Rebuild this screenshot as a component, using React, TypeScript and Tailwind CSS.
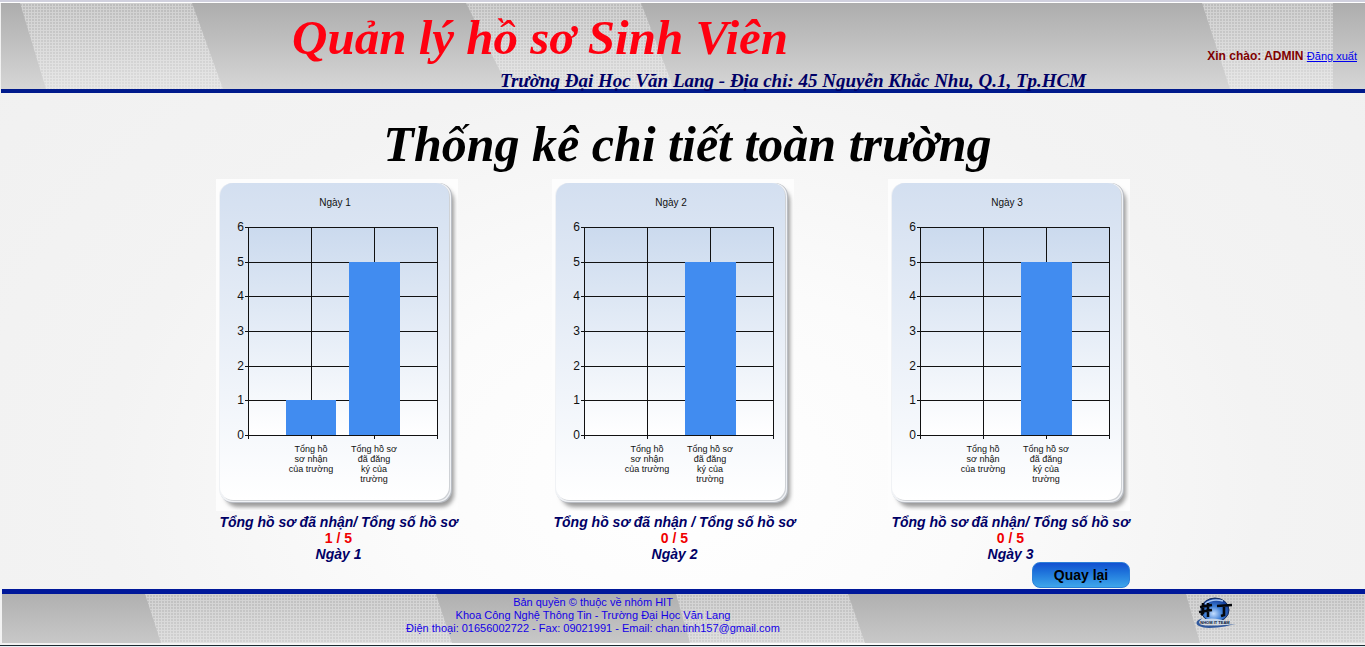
import React from "react";

type Day = { id: number; received: number; registered: number; caption: string };

const days: Day[] = [
  { id: 1, received: 1, registered: 5, caption: "Tổng hồ sơ đã nhận/ Tổng số hồ sơ" },
  { id: 2, received: 0, registered: 5, caption: "Tổng hồ sơ đã nhận / Tổng số hồ sơ" },
  { id: 3, received: 0, registered: 5, caption: "Tổng hồ sơ đã nhận/ Tổng số hồ sơ" },
];

const TOP = 48;
const BOTTOM = 256;
const yOf = (v: number) => Math.round(BOTTOM - (v * (BOTTOM - TOP)) / 6);

function Bands({ id, shapes }: { id: string; shapes: string[] }) {
  return (
    <svg className="absolute inset-0 h-full w-full" aria-hidden="true">
      <defs>
        <pattern id={id} width="3" height="3" patternUnits="userSpaceOnUse">
          <rect width="3" height="3" fill="#fff" fillOpacity="0.18" />
          <path d="M0 0H3V1H1V3H0Z" fill="#fff" fillOpacity="0.3" />
        </pattern>
      </defs>
      {shapes.map((s) => (
        <polygon key={s} points={s} fill={`url(#${id})`} />
      ))}
    </svg>
  );
}

function Chart({ day }: { day: Day }) {
  const area = `area-${day.id}`;
  const card = `card-${day.id}`;
  const shadow = `shadow-${day.id}`;
  return (
    <svg
      className="block bg-[#fdfdfd] font-['Liberation_Sans',sans-serif]"
      width="242"
      height="332"
      viewBox="0 0 242 332"
      role="img"
      aria-label={`Ngày ${day.id}`}
    >
      <defs>
        <linearGradient id={card} x1="0" y1="0" x2="0" y2="1">
          <stop offset="0" stopColor="#d3dff0" />
          <stop offset="1" stopColor="#ffffff" />
        </linearGradient>
        <linearGradient id={area} x1="0" y1="0" x2="0" y2="1">
          <stop offset="0" stopColor="#cbdaee" />
          <stop offset="1" stopColor="#ffffff" />
        </linearGradient>
        <filter id={shadow} x="-10%" y="-10%" width="120%" height="120%">
          <feGaussianBlur stdDeviation="2" />
        </filter>
      </defs>
      <rect x="9" y="9" width="229" height="319" rx="13" fill="#9a9a9a" filter={`url(#${shadow})`} />
      <rect x="4" y="4" width="232" height="320" rx="13" fill="#b9bdc4" />
      <rect x="3" y="4" width="232" height="319" rx="13" fill="#f0f2f5" />
      <rect x="5" y="5" width="229" height="317" rx="13" fill="#cfd2d6" />
      <rect x="4" y="4" width="229" height="317" rx="13" fill={`url(#${card})`} />
      <text x="119" y="27" textAnchor="middle" fontSize="10" fill="#111">
        Ngày {day.id}
      </text>
      <rect x="32" y={TOP} width="190" height={BOTTOM - TOP} fill={`url(#${area})`} />
      <g stroke="#111" strokeWidth="1" shapeRendering="crispEdges">
        {[0, 1, 2, 3, 4, 5, 6].map((v) => (
          <line key={v} x1="29" x2="222" y1={yOf(v) + 0.5} y2={yOf(v) + 0.5} />
        ))}
        {[32, 95, 158, 221].map((x) => (
          <line key={x} x1={x + 0.5} x2={x + 0.5} y1={TOP} y2={BOTTOM + 4} />
        ))}
      </g>
      {[0, 1, 2, 3, 4, 5, 6].map((v) => (
        <text key={v} x="28" y={yOf(v) + 4} textAnchor="end" fontSize="12" fill="#111">
          {v}
        </text>
      ))}
      <rect x="70" y={yOf(day.received)} width="50" height={BOTTOM - yOf(day.received)} fill="#418cf0" />
      <rect x="133" y={yOf(day.registered)} width="51" height={BOTTOM - yOf(day.registered)} fill="#418cf0" />
      <g fontSize="9" textAnchor="middle" fill="#111">
        {["Tổng hồ", "sơ nhận", "của trường"].map((t, i) => (
          <text key={t} x="95" y={273 + i * 10}>
            {t}
          </text>
        ))}
        {["Tổng hồ sơ", "đã đăng", "ký của", "trường"].map((t, i) => (
          <text key={t} x="158" y={273 + i * 10}>
            {t}
          </text>
        ))}
      </g>
    </svg>
  );
}

function Logo() {
  return (
    <svg className="block" width="44" height="34" viewBox="0 0 44 34" role="img" aria-label="HIT">
      <defs>
        <radialGradient id="globe" cx="0.45" cy="0.65" r="0.6">
          <stop offset="0" stopColor="#c4deff" />
          <stop offset="0.5" stopColor="#3f7fd6" />
          <stop offset="1" stopColor="#123c9a" />
        </radialGradient>
      </defs>
      <ellipse cx="21" cy="14" rx="14" ry="12" fill="url(#globe)" stroke="#142c5c" />
      <path d="M11 8Q18 2 29 5" fill="none" stroke="#a9c8f2" strokeWidth="1.5" />
      <path
        d="M9 22C-1 25 0 31 15 32C27 32 36 29 42 28C32 29 10 31 6 28C4 26 6 24 9 22Z"
        fill="#31599d"
      />
      <path d="M6 24Q20 20 35 26L34 29Q20 26 8 28Z" fill="#c3d4ea" />
      <path
        d="M6 11L18 9M5 16L18 14M9 7V17L7 19M14 7V21M23 10L38 9M30 9V19L27 20"
        fill="none"
        stroke="#05070c"
        strokeWidth="2.6"
      />
      <text x="21" y="28" textAnchor="middle" fontSize="4" fontWeight="700" fill="#0a1430">
        NHOM IT TEAM
      </text>
    </svg>
  );
}

export default function App() {
  return (
    <div className="flex min-h-screen flex-col bg-[radial-gradient(ellipse_at_50%_75%,#ffffff_0%,#fbfbfb_30%,#f3f3f3_60%,#f0f0f0_100%)] font-['Liberation_Sans',sans-serif]">
      <div className="h-[3px] border-b border-white bg-[#d0d0de]" />
      <header className="relative ml-px h-[90px] border-b-4 border-[#001a8c] bg-linear-to-b from-[#adadad] to-[#d6d6d6]">
        <Bands
          id="header-mesh"
          shapes={["19,0 191,0 222,86 45,86", "465,0 640,0 673,86 508,86", "1201,0 1332,0 1332,86 1229,86"]}
        />
        <div className="relative flex items-start justify-between">
          <div className="pl-[291px] font-['Liberation_Serif',serif] font-bold whitespace-nowrap italic">
            <h1 className="pt-1 text-[49px] leading-[62px] text-[#ff0010]">Quản lý hồ sơ Sinh Viên</h1>
            <p className="pl-52 text-[19px] leading-6 text-[#000066]">
              Trường Đại Học Văn Lang - Địa chỉ: 45 Nguyễn Khắc Nhu, Q.1, Tp.HCM
            </p>
          </div>
          <p className="pt-11 pr-2 text-[12px] leading-[18px] whitespace-nowrap">
            <span className="font-bold text-[#800000]">Xin chào: ADMIN</span>{" "}
            <a href="#logout" className="text-[11px] text-[#0000ee] underline">
              Đăng xuất
            </a>
          </p>
        </div>
      </header>

      <main className="flex-1">
        <h2 className="h-[86px] pt-5 pl-[10px] text-center font-['Liberation_Serif',serif] text-[50px] leading-[62px] font-bold text-black italic">
          Thống kê chi tiết toàn trường
        </h2>
        <div className="pr-[19px]">
          <div className="mx-auto flex max-w-[914px] flex-col">
            <div className="flex justify-between">
              {days.map((day) => (
                <section key={day.id} className="w-[242px]">
                  <Chart day={day} />
                  <div className="flex flex-col items-center pt-[3px] pl-[3px] text-[14px] leading-4 font-bold whitespace-nowrap text-[#000066]">
                    <p className="italic">{day.caption}</p>
                    <p className="text-[#f00000]">
                      {day.received} / {day.registered}
                    </p>
                    <p className="italic">Ngày {day.id}</p>
                  </div>
                </section>
              ))}
            </div>
            <button
              type="button"
              className="h-[26px] w-[98px] self-end rounded-lg border border-[#2c7fd8] bg-linear-to-b from-[#1450d0] to-[#3fa6ea] text-[14px] leading-6 font-bold text-black"
            >
              Quay lại
            </button>
          </div>
        </div>
      </main>

      <footer>
        <div className="relative ml-[2px] h-[54px] border-t-[5px] border-[#00189a] bg-linear-to-b from-[#b0b0b0] to-[#c8c8c8]">
          <Bands
            id="footer-mesh"
            shapes={["143,0 434,0 450,49 159,49", "674,0 846,0 863,49 688,49", "1184,0 2400,0 2400,49 1198,49"]}
          />
          <div className="relative flex">
            <div className="flex-1 pt-[2px] text-center text-[11px] leading-[13px] text-[#1400e6]">
              <p>Bản quyền © thuộc về nhóm HIT</p>
              <p>Khoa Công Nghệ Thông Tin - Trường Đại Học Văn Lang</p>
              <p>Điện thoại: 01656002722 - Fax: 09021991 - Email: chan.tinh157@gmail.com</p>
            </div>
            <div className="w-[181px] pt-[2px] pl-[10px]">
              <Logo />
            </div>
          </div>
        </div>
        <div className="mt-[2px] h-[2px] border-t border-[#1c2a30] bg-[#e8eef4]" />
      </footer>
    </div>
  );
}
